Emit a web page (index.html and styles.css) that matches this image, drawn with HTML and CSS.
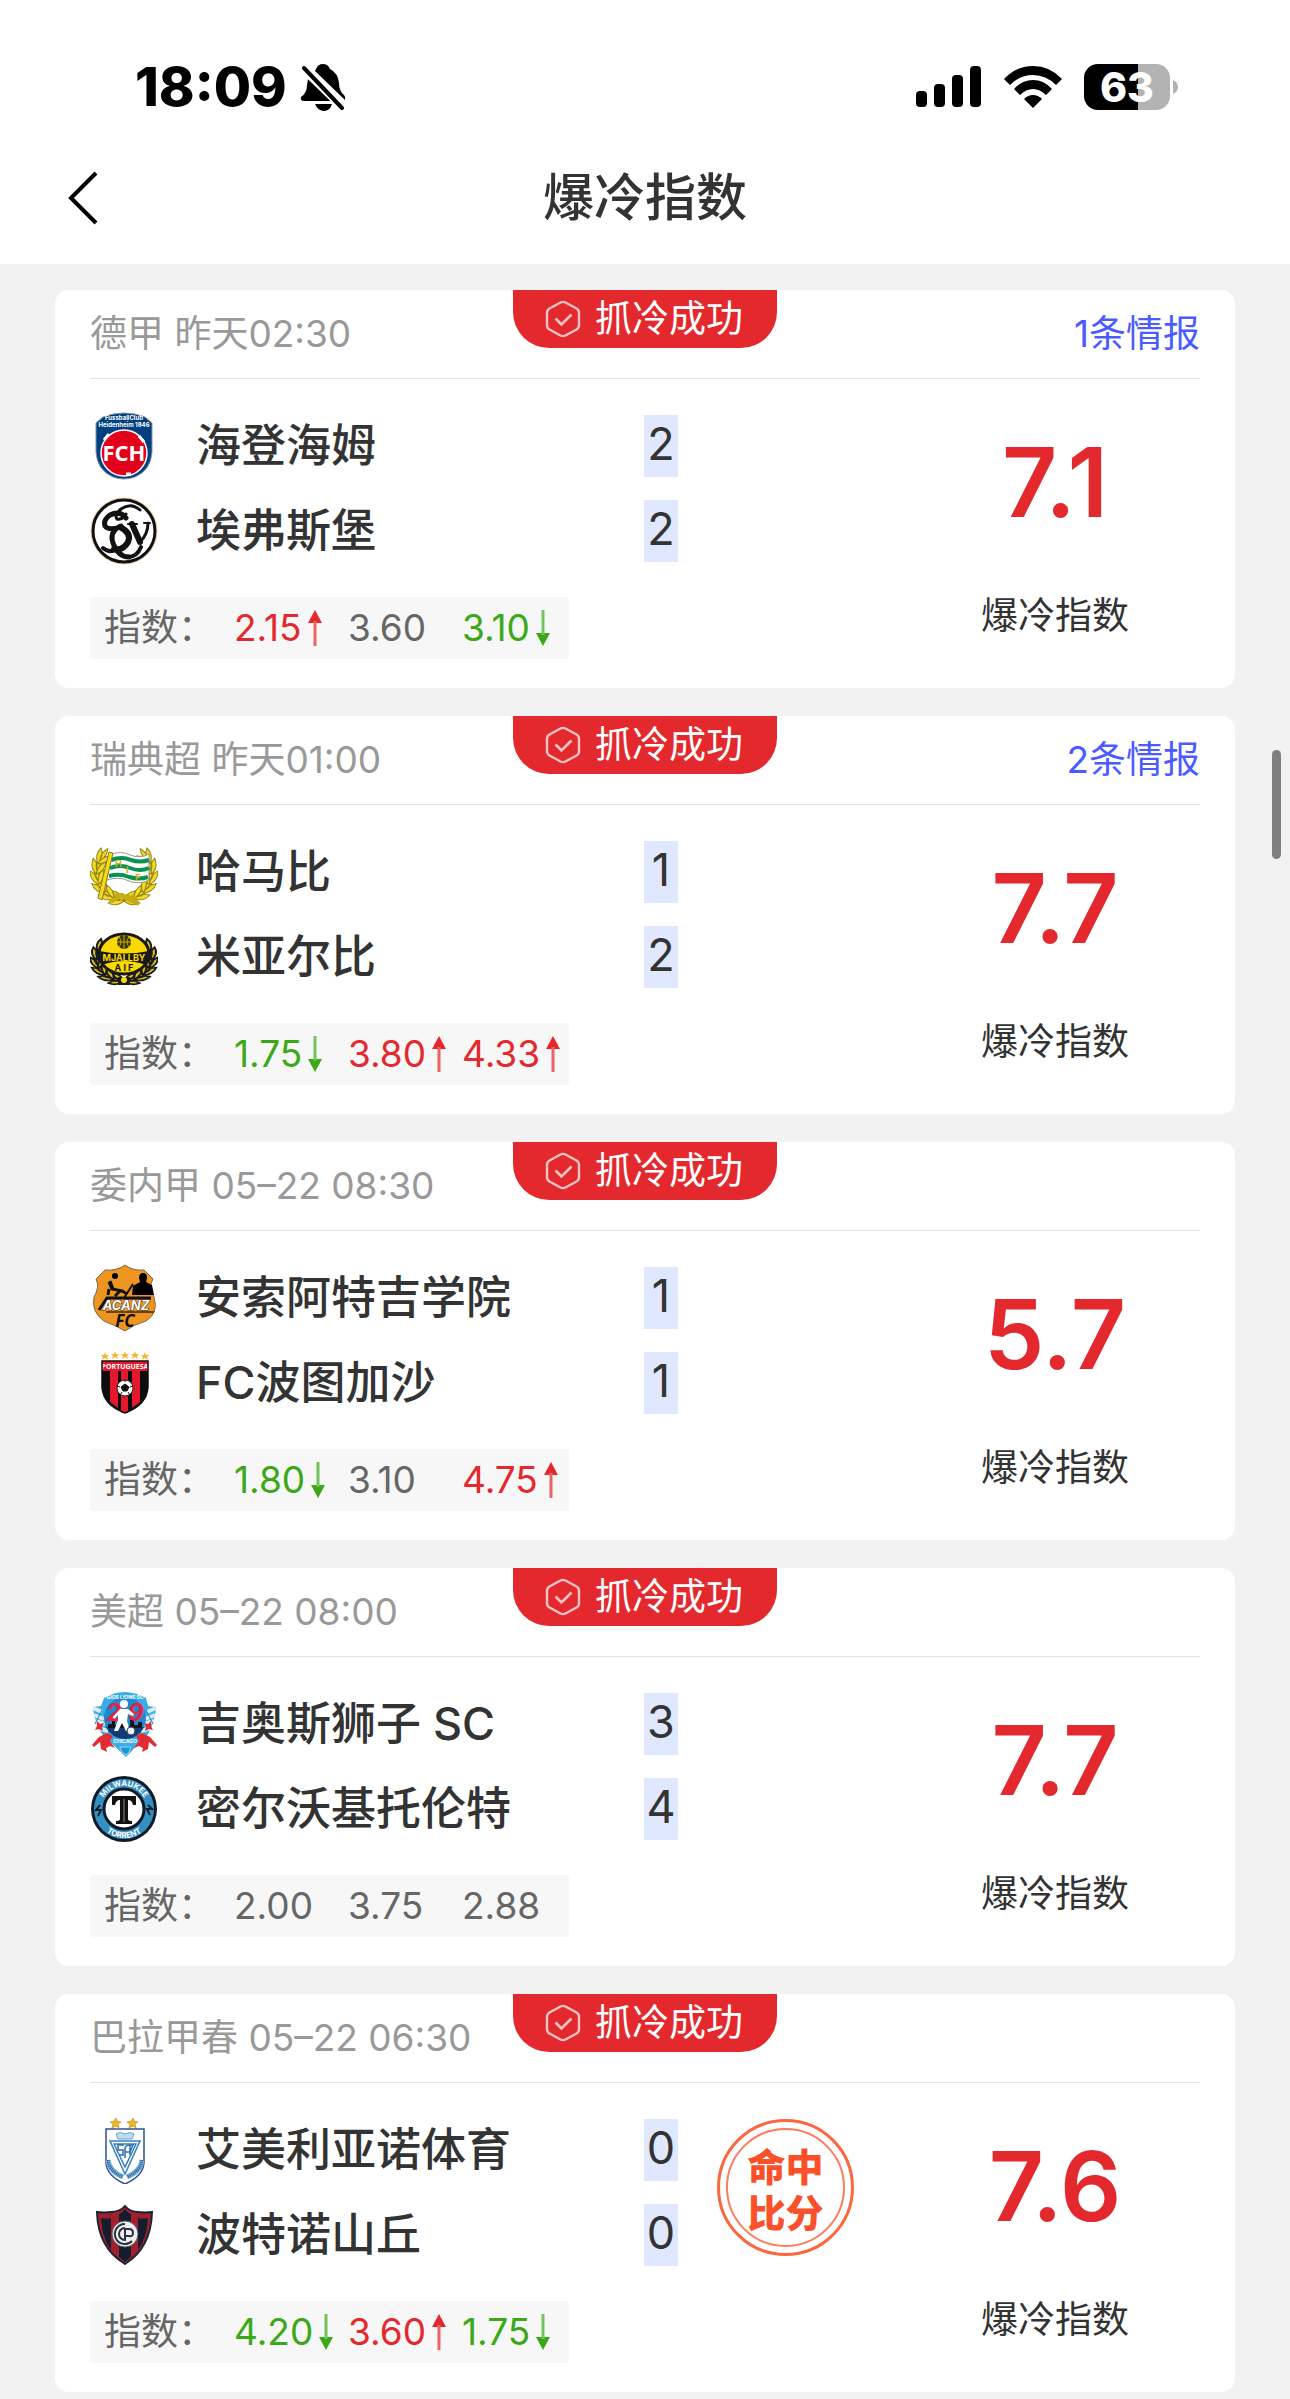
FILE: index.html
```html
<!DOCTYPE html>
<html lang="zh-CN">
<head>
    <meta charset="UTF-8">
    <meta name="viewport" content="width=device-width, initial-scale=1.0">
    <title>爆冷指数</title>
    <link rel="stylesheet" href="styles.css">
</head>
<body>

    <!-- SHARED ICONS -->
    <svg class="sprite" aria-hidden="true">
        <symbol id="icon-check" viewBox="0 0 36 38">
            <path d="M15.500 2.500Q18 1.200 20.500 2.500L31.500 8.500Q34 10 34 12.800V25.200Q34 28 31.500 29.500L20.500 35.500Q18 36.800 15.500 35.500L4.500 29.500Q2 28 2 25.200V12.800Q2 10 4.500 8.500Z" fill="none" stroke="#fbc4c4" stroke-width="2.400"/>
            <path d="M10.500 18.500l6 6L26.500 14.500" fill="none" stroke="#fbc4c4" stroke-width="2.600"/>
        </symbol>
        <symbol id="icon-up" viewBox="0 0 14 36">
            <path d="M7 0l7 13H0z" fill="#e3292d"/>
            <path d="M7 11v25" stroke="#ec6265" stroke-width="3"/>
        </symbol>
        <symbol id="icon-down" viewBox="0 0 14 36">
            <path d="M7 36l7-13H0z" fill="#3aa817"/>
            <path d="M7 0v25" stroke="#74c25c" stroke-width="3"/>
        </symbol>
        <defs>
            <!-- laurel branch, left half -->
            <g id="leaves">
                <path d="M7 42q-8-6-6-15 7 5 6 15zM7 42q0-10 7-14 1 9-7 14zM7 38q-4-7 0-14 4 7 0 14z"/>
            </g>
            <g id="branch">
                <use href="#leaves" transform="rotate(-76 34 35)"/>
                <use href="#leaves" transform="rotate(-54 34 35)"/>
                <use href="#leaves" transform="rotate(-32 34 35)"/>
                <use href="#leaves" transform="rotate(-10 34 35)"/>
                <use href="#leaves" transform="rotate(12 34 35)"/>
                <use href="#leaves" transform="rotate(34 34 35)"/>
            </g>
        </defs>
    </svg>

    <!-- STATUS BAR -->
    <div class="status-bar">
        <div class="status-left">
            <span class="clock">18:09</span>
            <svg class="bell" viewBox="0 0 46 48" aria-hidden="true">
                <path d="M16 6Q18 1 23 1t7 5q8 4 9 14 0 8 5 12 2 2 1 5L15 8zM8 16l26 22H4q-4 0-3-4 6-4 6-12zM15 41h17q-2 7-8 7t-9-7z"/>
                <path d="M4 6l39 38" stroke="#fff" stroke-width="9"/>
                <path d="M4 5l38 40" stroke="#000" stroke-width="4" stroke-linecap="round"/>
            </svg>
        </div>
        <div class="status-right">
            <svg class="signal" viewBox="0 0 66 42" aria-hidden="true">
                <rect x="0" y="25" width="11" height="16" rx="4"/>
                <rect x="18" y="18" width="11" height="23" rx="4"/>
                <rect x="36" y="9" width="11" height="32" rx="4"/>
                <rect x="54" y="0" width="11" height="41" rx="4"/>
            </svg>
            <svg class="wifi" viewBox="0 0 58 42" aria-hidden="true">
                <path d="M0 13Q12 0 29 0t29 13l-6 6Q42 9 29 9T6 19z"/>
                <path d="M10 23Q18 14 29 14t19 9l-6 6q-6-6-13-6t-13 6z"/>
                <path d="M20 33q4-4 9-4t9 4l-9 9z"/>
            </svg>
            <div class="battery"><span>63</span></div>
            <svg class="battery-tip" viewBox="0 0 5 14" aria-hidden="true"><path d="M0 0q5 2 5 7t-5 7z" fill="#b3b3b3"/></svg>
        </div>
    </div>

    <!-- NAV BAR -->
    <header class="nav-bar">
        <button class="back" type="button" aria-label="返回">
            <svg viewBox="0 0 32 54" aria-hidden="true"><path d="M29 2L4 27l25 25" fill="none" stroke="#000" stroke-width="4"/></svg>
        </button>
        <h1>爆冷指数</h1>
    </header>

    <main class="match-list">

        <article class="card">
            <div class="card-head">
                <span class="league">德甲 昨天02:30</span>
                <span class="tag"><svg><use href="#icon-check"/></svg>抓冷成功</span>
                <a class="intel" href="#">1条情报</a>
            </div>
            <div class="card-body">
                <div class="info">
                    <div class="team">
                        <svg class="crest" viewBox="0 0 68 68" aria-hidden="true">
                            <path d="M13 5Q23 1 34 1t21 4l7 6v29Q61 58 45 65q-11 4-22 0Q7 58 6 40V11z" fill="#00407f" stroke="#8792a5"/>
                            <text x="34" y="8" font-size="6" font-weight="700" fill="#fff" text-anchor="middle">FussballClub</text>
                            <text x="34" y="15" font-size="6" font-weight="700" fill="#fff" text-anchor="middle">Heidenheim 1846</text>
                            <circle cx="34" cy="41" r="23" fill="#e2001a" stroke="#fff" stroke-width="1.500"/>
                            <text class="crest-text" x="34" y="49" font-size="22" font-weight="700" fill="#fff" text-anchor="middle">FCH</text>
                            <path d="M14 28l5-6M36 62l5 0M49 24l5 6" stroke="#fff" stroke-width="3"/>
                        </svg>
                        <span class="name">海登海姆</span>
                        <span class="score">2</span>
                    </div>
                    <div class="team">
                        <svg class="crest" viewBox="0 0 68 68" aria-hidden="true">
                            <circle cx="34" cy="34" r="33" fill="#fff" stroke="#e8c986"/>
                            <circle cx="34" cy="34" r="31" fill="#fff" stroke="#111" stroke-width="3"/>
                            <g fill="none" stroke="#111" stroke-linecap="round">
                                <path d="M50 13Q41 5 31 12q-7 6-4 10 6 1 9-5" stroke-width="3"/>
                                <path d="M36 21Q30 13 20 18q-7 5-5 11 4 5 15 1M31 29q-12 5-8 17 5 14 16 14" stroke-width="5"/>
                                <path d="M30 30q12 6 8 15-5 9-14 7" stroke-width="6"/>
                                <path d="M13 51q6 5 13 2M38 60q9 0 13-10" stroke-width="4"/>
                                <path d="M42 27l8 18" stroke-width="6"/>
                                <path d="M50 45q8-8 8-19" stroke-width="3"/>
                                <path d="M38 27h9M54 26h6" stroke-width="2"/>
                            </g>
                        </svg>
                        <span class="name">埃弗斯堡</span>
                        <span class="score">2</span>
                    </div>
                    <div class="odds">
                        <span class="odds-label">指数：</span>
                        <span class="odd up">2.15<svg><use href="#icon-up"/></svg></span>
                        <span class="odd">3.60</span>
                        <span class="odd down">3.10<svg><use href="#icon-down"/></svg></span>
                    </div>
                </div>
                <div class="index">
                    <strong>7.1</strong>
                    <span>爆冷指数</span>
                </div>
            </div>
        </article>

        <article class="card">
            <div class="card-head">
                <span class="league">瑞典超 昨天01:00</span>
                <span class="tag"><svg><use href="#icon-check"/></svg>抓冷成功</span>
                <a class="intel" href="#">2条情报</a>
            </div>
            <div class="card-body">
                <div class="info">
                    <div class="team">
                        <svg class="crest" viewBox="0 0 68 68" aria-hidden="true">
                            <g fill="#f3dc1c" stroke="#94811f">
                                <use href="#branch"/>
                                <use href="#branch" transform="translate(68 0) scale(-1 1)"/>
                            </g>
                            <path d="M20 17q11-5 20 0 10 4 19-1v26q-10 5-20 1-10-5-22-1z" fill="#fff" stroke="#999"/>
                            <path d="M21 22q11-4 20 0 9 3 18 0M20 30q11-4 20 0 10 4 19 0M19 38q11-3 20 1 10 3 19 0" fill="none" stroke="#0a9250" stroke-width="4"/>
                            <g font-size="9" font-weight="700" fill="#d6a916"><text x="25" y="29">H</text><text x="36" y="35">I</text><text x="45" y="43">F</text></g>
                            <path d="M19 14l4 1-11 47-4-2z" fill="#f3dc1c" stroke="#8d7a1c"/>
                            <path d="M20 64l12-7 5 4 12 5M25 56l22 5" fill="none" stroke="#c8ac14" stroke-width="4"/>
                        </svg>
                        <span class="name">哈马比</span>
                        <span class="score">1</span>
                    </div>
                    <div class="team">
                        <svg class="crest" viewBox="0 0 68 68" aria-hidden="true">
                            <g fill="#d8bc18" stroke="#1a1a1a" stroke-width="2" transform="translate(0 8) scale(1 .8)">
                                <use href="#branch"/>
                                <use href="#branch" transform="translate(68 0) scale(-1 1)"/>
                            </g>
                            <ellipse cx="34" cy="31" rx="25" ry="20" fill="#f9d900" stroke="#1a1a1a" stroke-width="3"/>
                            <circle cx="34" cy="19" r="7" fill="#3a3408"/>
                            <path d="M27 19h14M34 12v14M29 14q4 5 0 10M39 14q-4 5 0 10" fill="none" stroke="#c9b008"/>
                            <path d="M9 28q25 5 50 0l-3 14q-22-8-44 0z" fill="#1a1a1a"/>
                            <text x="34" y="38" font-size="9" font-weight="700" fill="#f9d900" text-anchor="middle">MJÄLLBY</text>
                            <text x="34" y="48" font-size="9" font-weight="700" fill="#1a1a1a" text-anchor="middle">A I F</text>
                            <path d="M28 54h12v8H28z" fill="#1a1a1a"/><circle cx="34" cy="57" r="3" fill="#f9d900"/>
                        </svg>
                        <span class="name">米亚尔比</span>
                        <span class="score">2</span>
                    </div>
                    <div class="odds">
                        <span class="odds-label">指数：</span>
                        <span class="odd down">1.75<svg><use href="#icon-down"/></svg></span>
                        <span class="odd up">3.80<svg><use href="#icon-up"/></svg></span>
                        <span class="odd up">4.33<svg><use href="#icon-up"/></svg></span>
                    </div>
                </div>
                <div class="index">
                    <strong>7.7</strong>
                    <span>爆冷指数</span>
                </div>
            </div>
        </article>

        <article class="card">
            <div class="card-head">
                <span class="league">委内甲 05–22 08:30</span>
                <span class="tag"><svg><use href="#icon-check"/></svg>抓冷成功</span>
            </div>
            <div class="card-body">
                <div class="info">
                    <div class="team">
                        <svg class="crest" viewBox="0 0 68 68" aria-hidden="true">
                            <path d="M35 1q8 6 19 5l9 9q-5 8 1 18 5 16-8 24-13 4-21 10-10-6-21-10Q1 48 4 33q6-10 2-18l9-9Q27 7 35 1z" fill="#ee9420" stroke="#7d6847"/>
                            <circle cx="25" cy="12" r="3"/>
                            <path d="M19 18l3 7 10 2 5 3M19 25l-1 6M23 25l-3-8M30 27l-5 5" fill="none" stroke="#111" stroke-width="3"/>
                            <path d="M42 31l1-9 7-4-1-4q0-5 4-5t4 5l-1 4 6 3 2 10z"/>
                            <path d="M9 46l8-12h44" fill="none" stroke="#111" stroke-width="3"/>
                            <path d="M34 34l9-14" stroke="#111" stroke-width="2"/>
                            <text x="36" y="46" font-size="13" font-weight="700" font-style="italic" fill="#fff" stroke="#222" stroke-width="1" paint-order="stroke" text-anchor="middle">ACANZ</text>
                            <path d="M16 48h48" stroke="#70420b" stroke-width="2"/>
                            <text class="crest-text" x="35" y="63" font-size="17" font-weight="700" font-style="italic" fill="#111" text-anchor="middle">FC</text>
                        </svg>
                        <span class="name">安索阿特吉学院</span>
                        <span class="score">1</span>
                    </div>
                    <div class="team">
                        <svg class="crest" viewBox="0 0 68 68" aria-hidden="true">
                            <g fill="#f2b632">
                                <path id="star" d="M15 3l1 3h3l-2 2 1 3-3-2-3 2 1-3-2-2h3z"/>
                                <use href="#star" x="10" y="-1"/>
                                <use href="#star" x="20" y="-1"/>
                                <use href="#star" x="30" y="-1"/>
                                <use href="#star" x="40"/>
                            </g>
                            <path d="M12 12h46v26Q57 56 35 64 13 56 12 38z" fill="#0d0d0d"/>
                            <path d="M20 22h8v37l-8-6zM42 22h8v31l-8 6zM31 22h7v42h-7zM12 12h46v10H12z" fill="#e5172c"/>
                            <text class="crest-text" x="35" y="20" font-size="7" font-weight="700" fill="#fff" text-anchor="middle">PORTUGUESA</text>
                            <path d="M12 12h46v26Q57 56 35 64 13 56 12 38z" fill="none" stroke="#111" stroke-width="1.500"/>
                            <circle cx="35" cy="39" r="8" fill="#fff" stroke="#222"/>
                            <path d="M35 35l4 3-2 4h-4l-2-4zM35 31v2M27 37l3 1M43 37l-3 1M30 46l2-3M40 46l-2-3" fill="#111" stroke="#111"/>
                        </svg>
                        <span class="name">FC波图加沙</span>
                        <span class="score">1</span>
                    </div>
                    <div class="odds">
                        <span class="odds-label">指数：</span>
                        <span class="odd down">1.80<svg><use href="#icon-down"/></svg></span>
                        <span class="odd">3.10</span>
                        <span class="odd up">4.75<svg><use href="#icon-up"/></svg></span>
                    </div>
                </div>
                <div class="index">
                    <strong>5.7</strong>
                    <span>爆冷指数</span>
                </div>
            </div>
        </article>

        <article class="card">
            <div class="card-head">
                <span class="league">美超 05–22 08:00</span>
                <span class="tag"><svg><use href="#icon-check"/></svg>抓冷成功</span>
            </div>
            <div class="card-body">
                <div class="info">
                    <div class="team">
                        <svg class="crest" viewBox="0 0 68 68" aria-hidden="true">
                            <path d="M14 8q20-12 42 0l2 8 8 1q-1 15-8 27L36 67 12 44Q4 32 3 17l8-1z" fill="#39aee6"/>
                            <path d="M3 18l9 4M4 25l10 4M5 31l10 3M8 38l10 3M66 18l-9 4M65 25l-10 4M64 31l-10 3M61 38l-10 3" stroke="#d9eef8" stroke-width="4"/>
                            <path d="M12 20l-7 14M56 20l7 14" stroke="#2a77ad"/>
                            <circle cx="35" cy="28" r="21" fill="#2187cf"/>
                            <path d="M16 37h38Q48 49 35 49T16 37z" fill="#133c74"/>
                            <path d="M18 38v-4h4v-3h3v4h5v-3h4v4h6v-6h4v5h4v-3h4v6z" fill="#10151e"/>
                            <g font-size="24" font-weight="700" font-style="italic" fill="#e82242"><text x="16" y="31">2</text><text x="38" y="31">9</text></g>
                            <circle cx="34" cy="14" r="4" fill="#fff"/>
                            <path d="M30 19h8l6 5-1 2-5-2-1 7 3 10h-4l-4-8-4 8h-4l4-11v-5l-4 4-1-2z" fill="#fff"/>
                            <circle cx="41" cy="41" r="4" fill="#eee" stroke="#345"/>
                            <text x="35" y="9" font-size="5" font-weight="700" fill="#fff" text-anchor="middle">GIOS LIONS SC</text>
                            <path d="M2 55l7-8 8-4 6 3-3 5 5 7-5-2-4 2 1 4-6-3-1-7-6 5zM67 55l-7-8-8-4-6 3 3 5-5 7 5-2 4 2-1 4 6-3 1-7 6 5z" fill="#e32b32"/>
                            <path d="M7 31l3 3 4-1-2 4 1 4-4-2-4 1 2-4zM61 31l-3 3-4-1 2 4-1 4 4-2 4 1-2-4z" fill="#e32b32"/>
                            <text x="35" y="53" font-size="5" font-weight="700" fill="#fff" text-anchor="middle">CHICAGO</text>
                            <path d="M30 57h11l-2 5-3 3-4-3z" fill="#2494d0" stroke="#8bd5f5"/>
                        </svg>
                        <span class="name">吉奥斯狮子 SC</span>
                        <span class="score">3</span>
                    </div>
                    <div class="team">
                        <svg class="crest" viewBox="0 0 68 68" aria-hidden="true">
                            <defs>
                                <path id="ring-top" d="M11 34a23 23 0 0 1 46 0"/>
                                <path id="ring-bottom" d="M5 34a29 29 0 0 0 58 0"/>
                            </defs>
                            <circle cx="34" cy="34" r="33" fill="#101a26"/>
                            <circle cx="34" cy="34" r="30" fill="#3490c3"/>
                            <circle cx="34" cy="34" r="20" fill="#fff" stroke="#101a26" stroke-width="3"/>
                            <g font-size="8" font-weight="700" fill="#fff" text-anchor="middle">
                                <text><textPath href="#ring-top" startOffset="50%">MILWAUKEE</textPath></text>
                                <text><textPath href="#ring-bottom" startOffset="50%">TORRENT</textPath></text>
                            </g>
                            <path d="M22 21h24v9h-3q-1-5-5-5v19q0 2 4 2v3H26v-3q4 0 4-2V25q-4 0-5 5h-3z" fill="#111"/>
                            <path d="M34 24v23" stroke="#888"/>
                            <path d="M10 30l-4 5h5l-3 6M58 30l4 4h-5l3 6" fill="none" stroke="#101a26" stroke-width="2"/>
                        </svg>
                        <span class="name">密尔沃基托伦特</span>
                        <span class="score">4</span>
                    </div>
                    <div class="odds">
                        <span class="odds-label">指数：</span>
                        <span class="odd">2.00</span>
                        <span class="odd">3.75</span>
                        <span class="odd">2.88</span>
                    </div>
                </div>
                <div class="index">
                    <strong>7.7</strong>
                    <span>爆冷指数</span>
                </div>
            </div>
        </article>

        <article class="card">
            <div class="card-head">
                <span class="league">巴拉甲春 05–22 06:30</span>
                <span class="tag"><svg><use href="#icon-check"/></svg>抓冷成功</span>
            </div>
            <div class="card-body">
                <div class="info">
                    <div class="team">
                        <svg class="crest" viewBox="0 0 68 68" aria-hidden="true">
                            <path d="M26 2l1 3 4 1-3 2 1 4-3-2-4 2 1-4-3-2 4-1zM43 2l1 3 4 1-3 2 1 4-3-2-4 2 1-4-3-2 4-1z" fill="#f2b51f" stroke="#a87818" stroke-width=".5"/>
                            <path d="M16 13h38v34q-1 13-19 21Q17 60 16 47z" fill="#fff" stroke="#314f93" stroke-width="1.500"/>
                            <path d="M26 18q4-3 9 0 5-3 9 0l-2 5H28z" fill="#bddcf2" stroke="#6ba3d0"/>
                            <path d="M20 25h30L35 58zM24 28h22L35 51z" fill="none" stroke="#347fbe" stroke-width="1.500"/>
                            <path d="M34 29h-6v5h5v5h-4M35 42V32q1-3 5-3h3l-3 7h-5M40 29v10" fill="none" stroke="#2d6eae" stroke-width="1.500"/>
                            <path d="M18 44q1 11 15 17M52 44q-1 11-15 17" fill="none" stroke="#79afd8" stroke-width="5"/>
                            <path d="M18 44q1 11 15 17M52 44q-1 11-15 17" fill="none" stroke="#2d64a3" stroke-width="3" stroke-dasharray="1 1"/>
                        </svg>
                        <span class="name">艾美利亚诺体育</span>
                        <span class="score">0</span>
                    </div>
                    <div class="team">
                        <svg class="crest" viewBox="0 0 68 68" aria-hidden="true">
                            <path d="M35 5q4 5 12 6 8 1 15 0-1 36-27 52Q8 47 7 11q7 1 15 0 9-1 13-6z" fill="#a41f2d" stroke="#1a2435" stroke-width="2"/>
                            <path d="M11 17q5 1 10 0v32Q12 37 11 17zM48 17q5 1 10 0-1 20-10 32zM29 13q4-2 6-5 2 3 6 5v10H29zM29 44h12v12l-6 5-6-5z" fill="#131d2d"/>
                            <circle cx="35" cy="33" r="13" fill="#eee" stroke="#59606b"/>
                            <path d="M35 23a10 10 0 1 0 7 17M35 27a6 6 0 1 0 0 12M35 40V28h4q4 0 4 4t-4 3h-4" fill="none" stroke="#29313e" stroke-width="2"/>
                        </svg>
                        <span class="name">波特诺山丘</span>
                        <span class="score">0</span>
                    </div>
                    <div class="odds">
                        <span class="odds-label">指数：</span>
                        <span class="odd down">4.20<svg><use href="#icon-down"/></svg></span>
                        <span class="odd up">3.60<svg><use href="#icon-up"/></svg></span>
                        <span class="odd down">1.75<svg><use href="#icon-down"/></svg></span>
                    </div>
                </div>
                <div class="stamp"><span>命中<br>比分</span></div>
                <div class="index">
                    <strong>7.6</strong>
                    <span>爆冷指数</span>
                </div>
            </div>
        </article>

    </main>

    <div class="scroll-thumb"></div>

</body>
</html>
```
FILE: styles.css
```css
* {
    box-sizing: border-box;
}

body {
    margin: 0;
    background-color: #f2f2f2;
    color: #333;
    font-family: Inter, "Noto Sans CJK SC", sans-serif;
    font-size: 37px;
    line-height: 44px;
}

.sprite {
    position: absolute;
    width: 0;
    height: 0;
}

/* --- Status bar --- */
.status-bar {
    display: flex;
    justify-content: space-between;
    align-items: center;
    height: 132px;
    padding: 42px 112px 0 135px;
    background-color: #fff;
    color: #000;
}

.status-left,
.status-right {
    display: flex;
    align-items: center;
}

.clock {
    font-size: 54px;
    font-weight: 800;
}

.bell {
    width: 46px;
    height: 48px;
    margin-left: 13px;
}

.signal {
    width: 66px;
    height: 42px;
}

.wifi {
    width: 58px;
    height: 42px;
    margin: 0 22px;
}

.battery {
    width: 86px;
    height: 46px;
    border-radius: 14px;
    background: linear-gradient(to right, #000 63%, #b3b3b3 63%);
    color: #fff;
    font-size: 41px;
    font-weight: 800;
    line-height: 46px;
    text-align: center;
}

.battery-tip {
    width: 5px;
    height: 14px;
    margin-left: 3px;
}

/* --- Nav bar --- */
.nav-bar {
    display: grid;
    grid-template-columns: 1fr auto 1fr;
    align-items: center;
    height: 132px;
    padding: 0 67px;
    background-color: #fff;
}

.nav-bar h1 {
    margin: 0;
    font-size: 51px;
    font-weight: 500;
    line-height: 60px;
}

.back {
    width: 60px;
    height: 60px;
    padding: 0;
    border: none;
    background: none;
    text-align: left;
}

.back svg {
    display: block;
    width: 32px;
    height: 54px;
}

/* --- Match cards --- */
.match-list {
    display: flex;
    flex-direction: column;
    gap: 28px;
    padding: 26px 55px 0;
}

.card {
    padding: 0 35px 29px;
    border-radius: 14px;
    background-color: #fff;
}

.card-head {
    display: grid;
    grid-template-columns: 1fr auto 1fr;
    align-items: center;
    height: 89px;
    border-bottom: 1px solid #e4e4e4;
}

.league {
    color: #999;
    white-space: nowrap;
}

.tag {
    display: flex;
    align-self: start;
    align-items: center;
    gap: 14px;
    height: 58px;
    padding: 0 34px 0 32px;
    border-radius: 0 0 36px 36px;
    background-color: #e3292d;
    color: #fff;
}

.tag svg {
    width: 36px;
    height: 38px;
}

.intel {
    color: #4a5cff;
    text-align: right;
    text-decoration: none;
}

.card-body {
    display: flex;
    align-items: flex-start;
    padding-top: 33px;
}

.info {
    width: 588px;
}

.team {
    display: flex;
    align-items: center;
    height: 68px;
    margin-bottom: 17px;
}

.crest {
    width: 68px;
    height: 68px;
    margin-right: 38px;
}

.crest-text {
    font-family: "Open Sans", sans-serif;
}

.name {
    flex: 1;
    font-size: 45px;
    font-weight: 500;
}

.score {
    width: 34px;
    height: 62px;
    background-color: #dfe8ff;
    font-size: 45px;
    line-height: 58px;
    text-align: center;
}

.odds {
    display: flex;
    align-items: center;
    width: 479px;
    height: 62px;
    margin-top: 32px;
    padding-left: 14px;
    border-radius: 4px;
    background-color: #f7f7f7;
    color: #666;
}

.odds-label {
    flex: none;
    width: 130px;
}

.odd {
    display: flex;
    flex: none;
    align-items: center;
    gap: 6px;
    width: 114px;
}

.odd:last-child {
    width: auto;
}

.odd svg {
    width: 14px;
    height: 36px;
}

.up {
    color: #e3292d;
}

.down {
    color: #3aa817;
}

/* --- Upset index --- */
.index {
    display: flex;
    flex-direction: column;
    align-items: center;
    width: 290px;
    margin-left: auto;
    padding-top: 20px;
}

.index strong {
    margin-bottom: 62px;
    color: #e3292d;
    font-size: 96px;
    font-weight: 600;
    line-height: 100px;
}

/* --- Exact score stamp --- */
.stamp {
    display: flex;
    align-items: center;
    justify-content: center;
    width: 137px;
    height: 137px;
    margin: 3px 0 0 39px;
    border: 3px solid #f9683f;
    border-radius: 50%;
    color: #fb5029;
    font-family: "Noto Sans CJK SC", sans-serif;
    font-size: 38px;
    font-weight: 900;
    line-height: 46px;
}

.stamp span {
    display: flex;
    align-items: center;
    justify-content: center;
    width: 119px;
    height: 119px;
    border: 2px solid #fa7d5c;
    border-radius: 50%;
}

/* Page scroll indicator, floats over the list */
.scroll-thumb {
    position: absolute;
    top: 750px;
    right: 9px;
    width: 9px;
    height: 109px;
    border-radius: 5px;
    background-color: #7f7f7f;
}
```
